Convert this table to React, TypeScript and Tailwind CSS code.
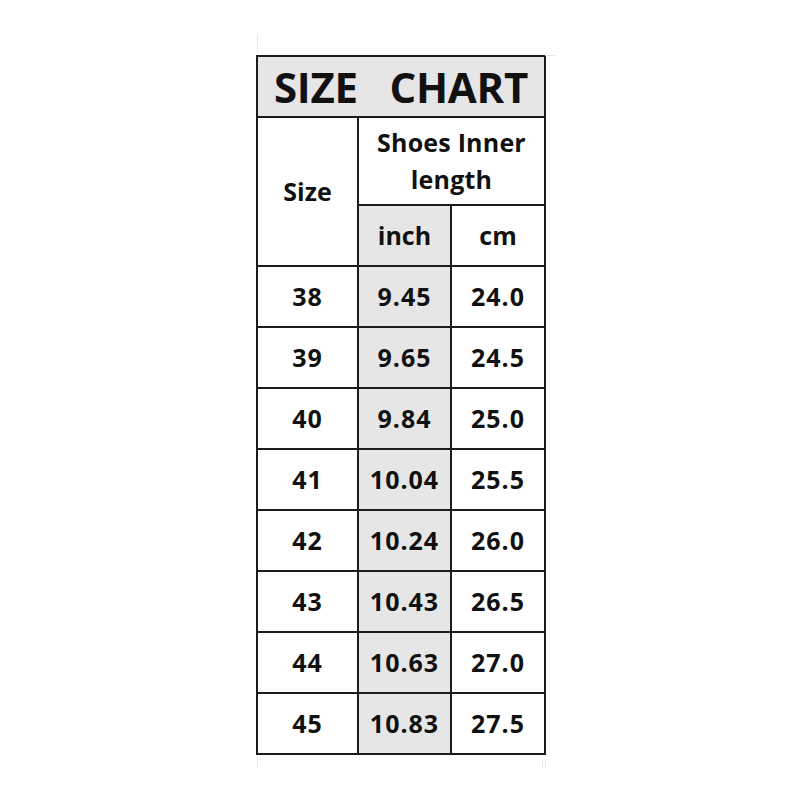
const rows: [string, string, string][] = [
  ["38", "9.45", "24.0"],
  ["39", "9.65", "24.5"],
  ["40", "9.84", "25.0"],
  ["41", "10.04", "25.5"],
  ["42", "10.24", "26.0"],
  ["43", "10.43", "26.5"],
  ["44", "10.63", "27.0"],
  ["45", "10.83", "27.5"],
];

const cell = "border-2 border-[#1c1c1c] text-center align-middle p-0";
const num = `${cell} text-[25px] tracking-[1px]`;

export default function App() {
  return (
    <div className="min-h-[800px] w-[800px] bg-white pt-[55px] font-['Open_Sans','Noto_Sans',sans-serif] font-bold text-[#111]">
      <div className="relative ml-[256px] w-[288px]">
        {/* faint crop marks left over around the chart */}
        <div className="absolute left-[1px] top-[-20px] h-[17px] w-px bg-[#dfe4ee]" />
        <div className="absolute right-[-11px] top-[0px] h-px w-[10px] bg-[#e3e7ef]" />
        <div className="absolute bottom-[-12px] left-[1px] h-[8px] w-px bg-[#dfe4ee]" />
        <div className="absolute bottom-[-12px] right-[-2px] h-[8px] w-[4px] border-x border-[#dfe4ee]" />
        <table className="w-full table-fixed border-collapse">
          <colgroup>
            <col className="w-[101px]" />
            <col className="w-[93px]" />
            <col className="w-[94px]" />
          </colgroup>
          <tbody>
            <tr className="h-[61px]">
              <td colSpan={3} className={`${cell} bg-[#e6e6e6] text-[42px] leading-none tracking-[-0.3px]`}>
                SIZE&nbsp;&nbsp;&nbsp;CHART
              </td>
            </tr>
            <tr className="h-[88px]">
              <td rowSpan={2} className={`${cell} text-[25px]`}>
                Size
              </td>
              <td colSpan={2} className={`${cell} text-[25px] leading-[37px] tracking-[0.2px]`}>
                Shoes Inner
                <br />
                length
              </td>
            </tr>
            <tr className="h-[61px]">
              <td className={`${cell} bg-[#e6e6e6] text-[25px]`}>inch</td>
              <td className={`${cell} text-[25px]`}>cm</td>
            </tr>
            {rows.map(([s, inch, cm]) => (
              <tr key={s} className="h-[61px]">
                <td className={num}>{s}</td>
                <td className={`${num} bg-[#e6e6e6]`}>{inch}</td>
                <td className={num}>{cm}</td>
              </tr>
            ))}
          </tbody>
        </table>
      </div>
    </div>
  );
}
